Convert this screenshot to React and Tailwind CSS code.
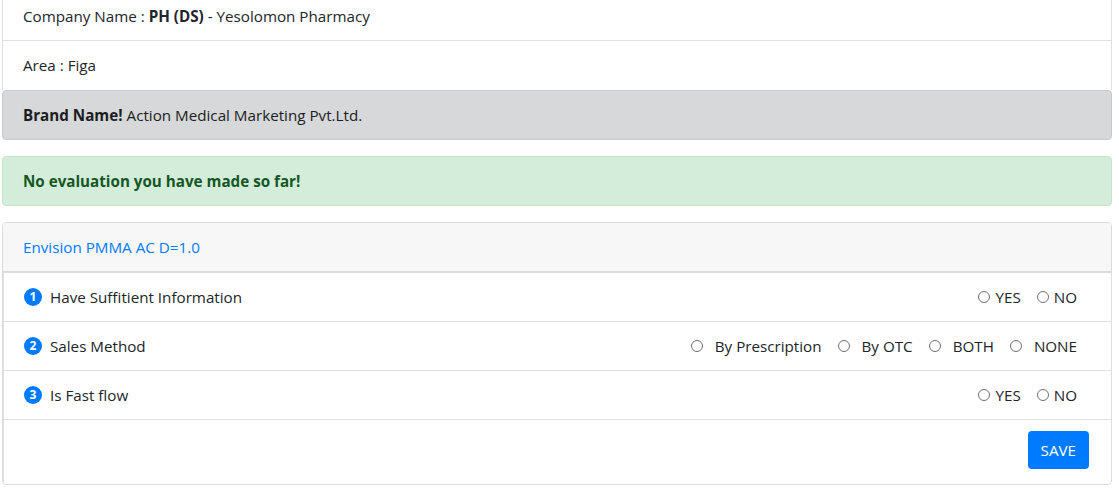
import React from 'react';

const questions = [
  { id: 1, label: 'Have Suffitient Information', options: ['YES', 'NO'], wide: false },
  { id: 2, label: 'Sales Method', options: ['By Prescription', 'By OTC', 'BOTH', 'NONE'], wide: true },
  { id: 3, label: 'Is Fast flow', options: ['YES', 'NO'], wide: false },
];

function Radio({ label, wide }) {
  return (
    <label className={`flex items-center ${wide ? 'gap-[12px]' : 'gap-[5px]'}`}>
      <span className="w-[12px] h-[12px] rounded-full border border-[#6f6f6f] bg-white" />
      <span>{label}</span>
    </label>
  );
}

export default function App() {
  return (
    <div
      className="w-[1119px] h-[489px] overflow-hidden bg-white text-[15.2px] text-[#212529]"
      style={{ fontFamily: '"Open Sans", "Noto Sans", sans-serif' }}
    >
      <div className="ml-[2px] mr-[7px]">
        <div className="-mt-[8px] border-x border-[#e0e0e0]">
          <div className="px-[20px] h-[49px] flex items-center border-b border-[#e0e0e0]">
            <span>
              Company Name : <b className="font-bold">PH (DS)</b> - Yesolomon Pharmacy
            </span>
          </div>
          <div className="px-[20px] h-[49px] flex items-center">Area : Figa</div>
        </div>

        <div className="h-[50px] flex items-center px-[20px] bg-[#d6d8d9] border border-[#c6c8ca] rounded-[4px] text-[#1b1e21]">
          <span>
            <b className="font-bold">Brand Name!</b> Action Medical Marketing Pvt.Ltd.
          </span>
        </div>

        <div className="mt-[16px] h-[50px] flex items-center px-[20px] bg-[#d4edda] border border-[#c3e6cb] rounded-[4px] text-[#155724] font-bold">
          No evaluation you have made so far!
        </div>

        <div className="mt-[16px] border border-[#dcdcdc] rounded-[4px] overflow-hidden">
          <div className="h-[50px] flex items-center px-[20px] bg-[#f7f7f7] border-b-2 border-[#dcdcdc] text-[#007bff]">
            Envision PMMA AC D=1.0
          </div>
          <div className="border-l border-[#e0e0e0]">
            {questions.map((q) => (
              <div
                key={q.id}
                className="h-[49px] flex items-center justify-between pl-[20px] pr-[34px] border-b border-[#e0e0e0]"
              >
                <div className="flex items-center gap-[8px]">
                  <span className="w-[18px] h-[18px] rounded-full bg-[#007bff] text-white text-[12px] font-bold flex items-center justify-center leading-none">
                    {q.id}
                  </span>
                  <span>{q.label}</span>
                </div>
                <div className="flex items-center gap-[16px]">
                  {q.options.map((o) => (
                    <Radio key={o} label={o} wide={q.wide} />
                  ))}
                </div>
              </div>
            ))}
            <div className="h-[64px] flex items-start justify-end pt-[11px] pr-[22px]">
              <button className="h-[38px] px-[13px] bg-[#007bff] text-white rounded-[4px]">SAVE</button>
            </div>
          </div>
        </div>
      </div>
    </div>
  );
}
